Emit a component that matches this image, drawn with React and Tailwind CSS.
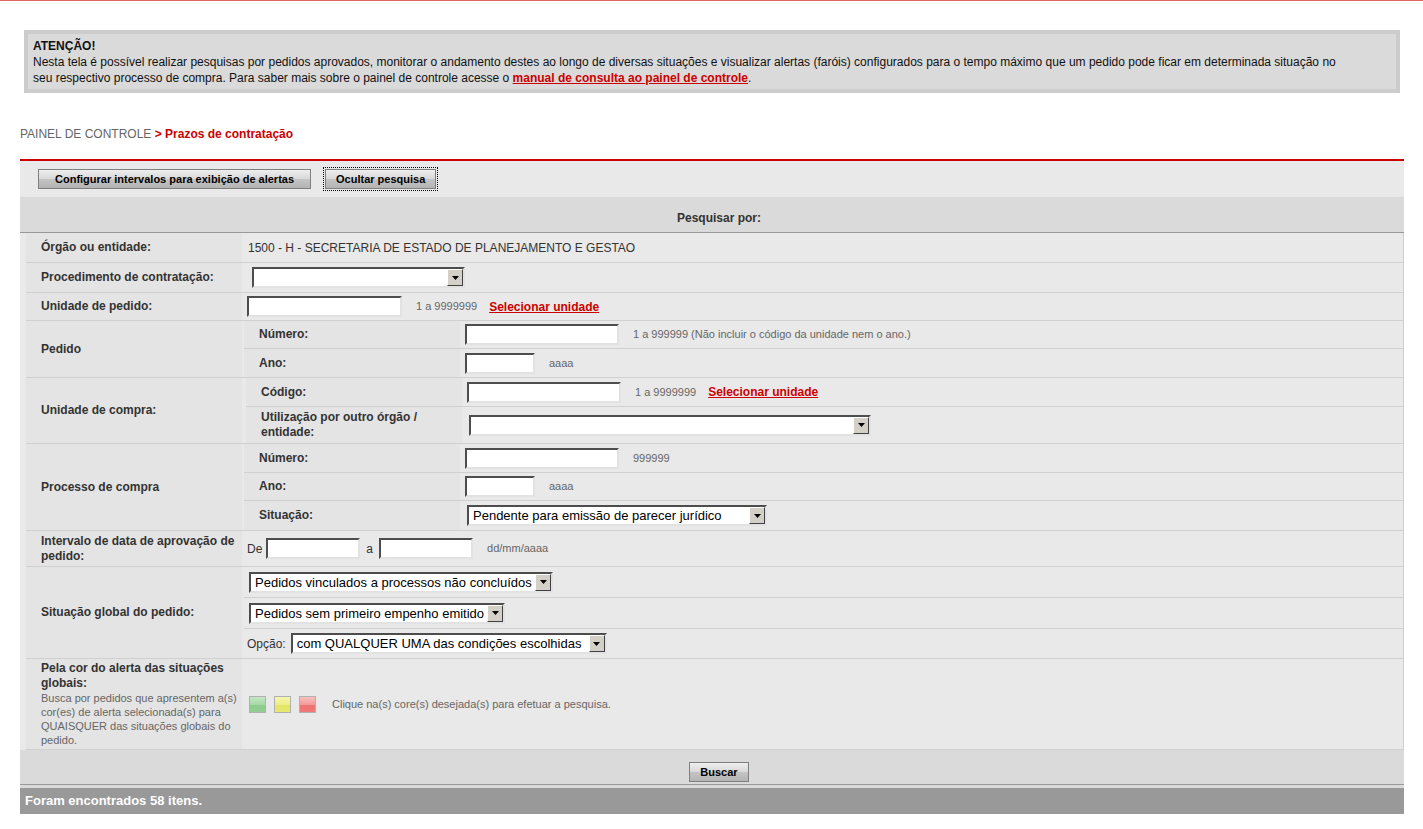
import React from "react";

const Input = ({ w }) => (
  <div
    className={`${w} h-[21px] bg-white border-2 border-t-[#4d4d4d] border-l-[#4d4d4d] border-r-[#e2e2e2] border-b-[#e2e2e2] shrink-0`}
  />
);

const Select = ({ w, text }) => (
  <div
    className={`${w} h-[21px] bg-white border-2 border-t-[#4d4d4d] border-l-[#4d4d4d] border-r-[#e2e2e2] border-b-[#e2e2e2] flex items-center justify-between shrink-0`}
  >
    <span className="pl-[4px] text-[13px] text-black whitespace-nowrap leading-none">{text}</span>
    <span className="w-[16px] h-[17px] bg-[#d4d0c8] border border-t-white border-l-white border-r-[#404040] border-b-[#404040] flex items-center justify-center">
      <svg width="7" height="4" viewBox="0 0 7 4">
        <path d="M0 0h7L3.5 4z" fill="#000" />
      </svg>
    </span>
  </div>
);

const Hint = ({ children, className = "" }) => (
  <span className={`text-[11px] text-[#666] ${className}`}>{children}</span>
);

const Link = ({ children }) => (
  <span className="text-[12px] font-bold text-[#cc0000] underline">{children}</span>
);

const Btn = ({ children, focused, px = "px-[10px]" }) => (
  <button
    className={`h-[20px] ${px} text-[11px] font-bold text-black border border-[#7f7f7f] bg-[linear-gradient(#eeeeee,#d8d8d8_50%,#c4c4c4_51%,#b4b4b4)] leading-none ${
      focused ? "outline-1 outline-dotted outline-black outline-offset-1" : ""
    }`}
  >
    {children}
  </button>
);

const labelCls =
  "w-[216px] shrink-0 bg-[#e4e4e4] pl-[15px] pr-[4px] flex items-center font-bold text-[12px] text-[#333] leading-[15px]";

const Square = ({ c }) => <div className={`w-[17px] h-[17px] border border-[#b0b0b0] ${c}`} />;

export default function App() {
  return (
    <div className="font-[family-name:'Liberation_Sans',Arial,sans-serif] bg-white min-h-[829px] text-[#333]">
      <div className="h-[1px] bg-[#e06666]" />

      {/* aviso */}
      <div className="ml-[24px] mt-[29px] w-[1376px] border-4 border-[#cccccc] bg-[#dadada] pl-[5px] pr-[8px] pt-[4px] pb-[3px] text-[12px] leading-[16px] text-[#111]">
        <div className="font-bold">ATENÇÃO!</div>
        <div>
          Nesta tela é possível realizar pesquisas por pedidos aprovados, monitorar o andamento destes ao longo de
          diversas situações e visualizar alertas (faróis) configurados para o tempo máximo que um pedido pode ficar em
          determinada situação no
          <br />
          seu respectivo processo de compra. Para saber mais sobre o painel de controle acesse o{" "}
          <span className="font-bold text-[#cc0000] underline">manual de consulta ao painel de controle</span>.
        </div>
      </div>

      <div className="ml-[20px] mt-[33px] text-[12px] leading-[16px]">
        <span className="text-[#666]">PAINEL DE CONTROLE</span>
        <span className="text-[#cc0000] font-bold"> &gt; Prazos de contratação</span>
      </div>

      {/* painel */}
      <div className="ml-[20px] mt-[17px] w-[1384px] border-t-2 border-[#cc0000] bg-[#e9e9e9]">
        <div className="h-[36px] flex items-center pl-[18px] gap-[14px]">
          <Btn px="px-[16px]">Configurar intervalos para exibição de alertas</Btn>
          <Btn focused>Ocultar pesquisa</Btn>
        </div>
        <div className="h-[36px] bg-[#dadada] border-b border-[#999] flex items-center justify-center pt-[6px] pl-[14px] text-[12px] font-bold text-[#333]">
          Pesquisar por:
        </div>

        <div className="ml-[6px] border-r border-[#d0d0d0] text-[12px]">
          <div className="flex gap-[2px] border-b border-[#d0d0d0] h-[30px]">
            <div className={labelCls}>Órgão ou entidade:</div>
            <div className="flex-1 flex items-center pl-[4px]">1500 - H - SECRETARIA DE ESTADO DE PLANEJAMENTO E GESTAO</div>
          </div>

          <div className="flex gap-[2px] border-b border-[#d0d0d0] h-[30px]">
            <div className={labelCls}>Procedimento de contratação:</div>
            <div className="flex-1 flex items-center pl-[8px]">
              <Select w="w-[213px]" text="" />
            </div>
          </div>

          <div className="flex gap-[2px] border-b border-[#d0d0d0] h-[28px]">
            <div className={labelCls}>Unidade de pedido:</div>
            <div className="flex-1 flex items-center pl-[3px]">
              <Input w="w-[155px]" />
              <Hint className="ml-[14px]">1 a 9999999</Hint>
              <span className="ml-[12px]">
                <Link>Selecionar unidade</Link>
              </span>
            </div>
          </div>

          <div className="flex gap-[2px] border-b border-[#d0d0d0] h-[57px]">
            <div className={labelCls}>Pedido</div>
            <div className="flex-1 flex flex-col">
              <div className="flex gap-[2px] border-b border-[#d0d0d0] h-[28px]">
                <div className={labelCls}>Número:</div>
                <div className="flex-1 flex items-center pl-[3px]">
                  <Input w="w-[154px]" />
                  <Hint className="ml-[14px]">1 a 999999 (Não incluir o código da unidade nem o ano.)</Hint>
                </div>
              </div>
              <div className="flex gap-[2px] flex-1">
                <div className={labelCls}>Ano:</div>
                <div className="flex-1 flex items-center pl-[3px]">
                  <Input w="w-[70px]" />
                  <Hint className="ml-[14px]">aaaa</Hint>
                </div>
              </div>
            </div>
          </div>

          <div className="flex gap-[2px] border-b border-[#d0d0d0] h-[66px]">
            <div className={labelCls}>Unidade de compra:</div>
            <div className="flex-1 flex flex-col pl-[2px]">
              <div className="flex gap-[2px] border-b border-[#d0d0d0] h-[29px]">
                <div className={labelCls}>Código:</div>
                <div className="flex-1 flex items-center pl-[3px]">
                  <Input w="w-[154px]" />
                  <Hint className="ml-[14px]">1 a 9999999</Hint>
                  <span className="ml-[12px]">
                    <Link>Selecionar unidade</Link>
                  </span>
                </div>
              </div>
              <div className="flex gap-[2px] flex-1">
                <div className={labelCls}>Utilização por outro órgão / entidade:</div>
                <div className="flex-1 flex items-center pl-[5px]">
                  <Select w="w-[402px]" text="" />
                </div>
              </div>
            </div>
          </div>

          <div className="flex gap-[2px] border-b border-[#d0d0d0] h-[87px]">
            <div className={labelCls}>Processo de compra</div>
            <div className="flex-1 flex flex-col">
              <div className="flex gap-[2px] border-b border-[#d0d0d0] h-[29px]">
                <div className={labelCls}>Número:</div>
                <div className="flex-1 flex items-center pl-[3px]">
                  <Input w="w-[154px]" />
                  <Hint className="ml-[14px]">999999</Hint>
                </div>
              </div>
              <div className="flex gap-[2px] border-b border-[#d0d0d0] h-[28px]">
                <div className={labelCls}>Ano:</div>
                <div className="flex-1 flex items-center pl-[3px]">
                  <Input w="w-[70px]" />
                  <Hint className="ml-[14px]">aaaa</Hint>
                </div>
              </div>
              <div className="flex gap-[2px] flex-1">
                <div className={labelCls}>Situação:</div>
                <div className="flex-1 flex items-center pl-[5px]">
                  <Select w="w-[300px]" text="Pendente para emissão de parecer jurídico" />
                </div>
              </div>
            </div>
          </div>

          <div className="flex gap-[2px] border-b border-[#d0d0d0] h-[36px]">
            <div className={labelCls}>Intervalo de data de aprovação de pedido:</div>
            <div className="flex-1 flex items-center pl-[3px] text-[12px]">
              <span className="mr-[4px]">De</span>
              <Input w="w-[94px]" />
              <span className="mx-[6px]">a</span>
              <Input w="w-[94px]" />
              <Hint className="ml-[14px]">dd/mm/aaaa</Hint>
            </div>
          </div>

          <div className="flex gap-[2px] border-b border-[#d0d0d0] h-[92px]">
            <div className={labelCls}>Situação global do pedido:</div>
            <div className="flex-1 flex flex-col">
              <div className="flex items-center border-b border-[#d0d0d0] h-[31px] pl-[5px]">
                <Select w="w-[304px]" text="Pedidos vinculados a processos não concluídos" />
              </div>
              <div className="flex items-center border-b border-[#d0d0d0] h-[31px] pl-[5px]">
                <Select w="w-[256px]" text="Pedidos sem primeiro empenho emitido" />
              </div>
              <div className="flex items-center flex-1 pl-[3px]">
                <span className="mr-[5px] text-[12px]">Opção:</span>
                <Select w="w-[316px]" text="com QUALQUER UMA das condições escolhidas" />
              </div>
            </div>
          </div>

          <div className="flex gap-[2px] border-b border-[#d0d0d0] h-[91px]">
            <div className={`${labelCls} flex-col items-start justify-center`}>
              <div>Pela cor do alerta das situações globais:</div>
              <div className="font-normal text-[11px] text-[#666] leading-[14px]">
                Busca por pedidos que apresentem a(s) cor(es) de alerta selecionada(s) para QUAISQUER das situações
                globais do pedido.
              </div>
            </div>
            <div className="flex-1 flex items-center pl-[5px]">
              <Square c="bg-[linear-gradient(#c4e8c4,#a8d9a8_50%,#8fcb8f_51%,#93cd93)]" />
              <span className="ml-[8px]">
                <Square c="bg-[linear-gradient(#f6f6b0,#eeee88_50%,#e4e466_51%,#e8e870)]" />
              </span>
              <span className="ml-[8px]">
                <Square c="bg-[linear-gradient(#f8c0c0,#f49a9a_50%,#ee7272_51%,#f07878)]" />
              </span>
              <Hint className="ml-[16px]">Clique na(s) core(s) desejada(s) para efetuar a pesquisa.</Hint>
            </div>
          </div>
        </div>

        <div className="bg-[#dadada] pb-[3px]">
          <div className="h-[35px] border-b border-[#999] flex justify-center pt-[12px] pl-[14px]">
            <Btn>Buscar</Btn>
          </div>
        </div>
        <div className="h-[26px] bg-[#999999] flex items-center pl-[5px] text-[13px] font-bold text-white">
          Foram encontrados 58 itens.
        </div>
      </div>
    </div>
  );
}
